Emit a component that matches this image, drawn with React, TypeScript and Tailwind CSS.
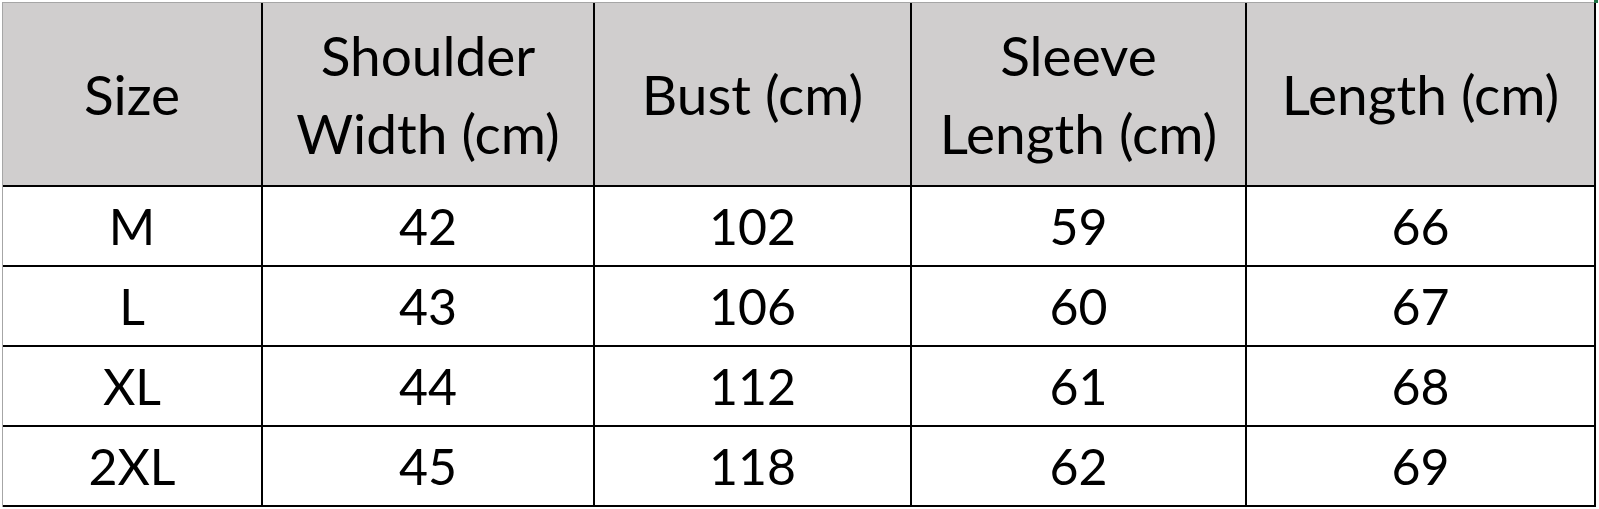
import React from "react";

const headers: string[][] = [
  ["Size"],
  ["Shoulder", "Width (cm)"],
  ["Bust (cm)"],
  ["Sleeve", "Length (cm)"],
  ["Length (cm)"],
];

const rows: string[][] = [
  ["M", "42", "102", "59", "66"],
  ["L", "43", "106", "60", "67"],
  ["XL", "44", "112", "61", "68"],
  ["2XL", "45", "118", "62", "69"],
];

export default function App() {
  return (
    <div className="relative w-[1599px] h-[509px] bg-white overflow-hidden pt-[2px] pl-[2px]">
      <div
        className="inline-grid border-t border-l border-[#a6a6a6] bg-black gap-[2px] pr-[2px] pb-[2px] grid-cols-[258px_330px_315px_333px_347px] grid-rows-[182px_78px_78px_78px_78px] text-black"
        style={{ fontFamily: 'Lato, "Open Sans", sans-serif' }}
      >
        {headers.map((h, i) => (
          <div
            key={"h" + i}
            className="bg-[#d0cece] flex flex-col items-center justify-center text-center text-[55px] leading-[78px]"
          >
            {h.map((line, j) => (
              <div key={j}>{line}</div>
            ))}
          </div>
        ))}
        {rows.map((r, ri) =>
          r.map((c, ci) => (
            <div
              key={ri + "-" + ci}
              className="bg-white flex items-center justify-center text-[50px] leading-none"
            >
              {c}
            </div>
          ))
        )}
      </div>
      <div className="absolute left-[1594px] top-0 w-[4px] h-[3px] bg-[#217346]" />
    </div>
  );
}
